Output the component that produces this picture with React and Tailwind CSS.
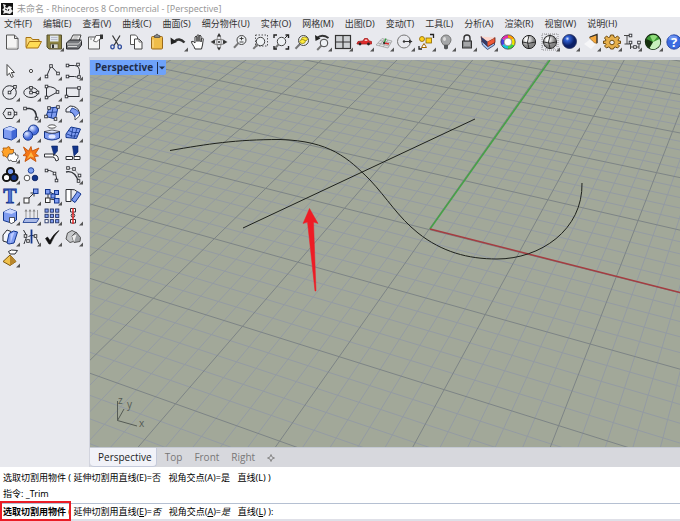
import React from "react";

const INK = "#2f3136";
const BLUE = "#7f9cf0";
const NAVY = "#12358c";

// small open-handle square used by the curve tools
const Dot = ({ x, y, s = 2.6, fill = "#fff" }) => (
  <rect x={x - s / 2} y={y - s / 2} width={s} height={s} fill={fill} stroke={INK} strokeWidth="0.9" />
);

const Lens = ({ x = 11.5, y = 8, r = 4.5, fill = "#eef1f4" }) => (
  <>
    <path d={`M${x - r * 0.7} ${y + r * 0.7}L${x - r - 3} ${y + r + 3.2}`} stroke="#777" strokeWidth="2" />
    <circle cx={x} cy={y} r={r} fill={fill} stroke="#444" strokeWidth="1" />
  </>
);

const mainTools = [
  {
    name: "New",
    icon: (
      <>
        <path d="M4.500 3h8l3.500 3.500v10.500h-11.500z" fill="#f4f4f4" stroke="#555" />
        <path d="M12.500 3v3.500h3.500" stroke="#555" />
        <path d="M6 16h9V8" stroke="#ccc" />
      </>
    ),
  },
  {
    name: "Open",
    icon: (
      <>
        <path d="M3 15V5.500h5l1.500 2h6.500v2" fill="#f8d878" stroke="#a87310" />
        <path d="M3 16l3.500-6.500h12l-3.500 6.500z" fill="#ffdc55" stroke="#a87310" />
      </>
    ),
  },
  {
    name: "Save",
    menu: true,
    icon: (
      <>
        <path d="M3 3h14.500v14H5l-2-2z" fill="#8e8442" stroke="#554f2c" />
        <rect x="6" y="3.500" width="8.500" height="6" fill="#dfe6ee" />
        <path d="M7 5.500h6.500M7 7.500h6.500" stroke="#aab" strokeWidth="0.7" />
        <rect x="6.500" y="12" width="7.500" height="4.500" fill="#d7d7cf" stroke="#554f2c" strokeWidth="0.6" />
        <rect x="8" y="12.500" width="2" height="3.500" fill="#333" />
      </>
    ),
  },
  {
    name: "Print",
    icon: (
      <>
        <path d="M6 9l3-6h8l-2 6z" fill="#f6f6f6" stroke="#444" />
        <path d="M9.500 5h5M8.500 7h5" stroke="#777" strokeWidth="0.7" />
        <path d="M2.500 11l3-3h12v5l-3 4h-12z" fill="#77797d" stroke="#26272a" />
        <path d="M3 12h11.500l3-3.500M4 14.500h9" stroke="#d9d9d9" />
      </>
    ),
  },
  {
    name: "Document Properties",
    icon: (
      <>
        <path d="M3.500 5h11v12h-11z" fill="#f2f3f4" stroke="#555" />
        <path d="M8.500 9l2.500-5.500h6v3l-3 1-2.500 2.500z" fill="#fff" stroke="#444" strokeWidth="0.8" />
        <path d="M15 2.500h3v4.500h-3z" fill="#333" />
        <path d="M5 7h2" stroke="#777" strokeWidth="0.8" />
      </>
    ),
  },
  {
    name: "Cut",
    icon: (
      <>
        <path d="M6.500 3.500l6 10M14 3.500l-6 10" stroke="#333" strokeWidth="1.200" />
        <ellipse cx="6.500" cy="14.800" rx="1.700" ry="2" stroke="#304d9c" strokeWidth="1.300" />
        <ellipse cx="13.700" cy="14.800" rx="1.700" ry="2" stroke="#304d9c" strokeWidth="1.300" />
      </>
    ),
  },
  {
    name: "Copy",
    icon: (
      <>
        <path d="M4.500 3h5l2 2v7.500h-7z" fill="#fff" stroke="#555" />
        <path d="M8.500 7h4.500l3 3v7h-7.500z" fill="#fafafa" stroke="#444" />
        <path d="M13 7v3h3" stroke="#555" strokeWidth="0.8" />
      </>
    ),
  },
  {
    name: "Paste",
    icon: (
      <>
        <rect x="4.500" y="4.500" width="11" height="12.500" rx="1" fill="#f0bd49" stroke="#9a691c" />
        <path d="M7.500 5.500v-2h1.200a1.300 1.300 0 0 1 2.600 0h1.400v2z" fill="#888" stroke="#444" strokeWidth="0.7" />
        <path d="M6 15.500v-8" stroke="#ffe09a" />
      </>
    ),
  },
  {
    name: "Undo",
    menu: true,
    icon: (
      <>
        <path d="M6.500 9.500Q11 5 16.500 10.500" stroke="#333" strokeWidth="2.400" />
        <path d="M2.500 5.500l.5 7 6-2.500z" fill="#222" />
      </>
    ),
  },
  {
    name: "Pan",
    icon: (
      <path
        d="M7 17C6 13.500 3.500 12 3.500 9.500q1.500-1 3.500 1.500V5q1-1.500 2 0v4.500V3.500q1-1.500 2 0v6V4q1-1.500 2 0v6l.5-3.500q1.200-1 1.800.4L14.500 13l-1 4z"
        fill="#fff"
        stroke="#333"
      />
    ),
  },
  {
    name: "Rotate View",
    icon: (
      <>
        <ellipse cx="10" cy="10" rx="7" ry="2.600" stroke="#777" />
        <ellipse cx="10" cy="10" rx="2.200" ry="6.500" stroke="#888" />
        <path d="M1.500 10l4.500-2v3.500zM18.500 10l-4.500-2v4zM8 4.500l2-3.500 2.200 3.500zM8 15.500h4l-2 3z" fill="#333" />
        <circle cx="10" cy="10" r="1" fill="#333" />
      </>
    ),
  },
  {
    name: "Zoom Dynamic",
    icon: (
      <>
        <Lens />
        <path d="M9.500 6.500h4M11.500 4.700v3.600M9.500 10h4" stroke="#333" strokeWidth="0.9" />
      </>
    ),
  },
  {
    name: "Zoom Window",
    icon: (
      <>
        <rect x="5.500" y="3" width="12" height="11" stroke="#444" strokeDasharray="1.5 1.5" strokeWidth="0.9" />
        <Lens x={10.5} y={9.5} r={4.2} />
      </>
    ),
  },
  {
    name: "Zoom Extents",
    icon: (
      <>
        <Lens x={10.5} y={9.5} r={4.2} />
        <path d="M3 6V3h3M14.500 3h3v3M17.500 14v3h-3M3 14v3h3" stroke="#222" strokeWidth="1.400" />
        <path d="M14 6l3-3" stroke="#222" />
      </>
    ),
  },
  {
    name: "Zoom Selected",
    icon: (
      <>
        <Lens x={11.5} y={8.5} r={5} />
        <ellipse cx="12.500" cy="7" rx="3" ry="2" fill="#ffec3d" stroke="#8f8210" strokeWidth="0.8" />
        <ellipse cx="10.500" cy="9.500" rx="2.800" ry="2" fill="#ffec3d" stroke="#8f8210" strokeWidth="0.8" />
      </>
    ),
  },
  {
    name: "Undo View",
    menu: true,
    icon: (
      <>
        <Lens x={12} y={11} r={3.8} />
        <path d="M5 6Q10 1.500 16.500 6" stroke="#333" strokeWidth="2" />
        <path d="M3 3l.5 6 5-2.500z" fill="#222" />
      </>
    ),
  },
  {
    name: "4 Viewports",
    menu: true,
    icon: (
      <>
        <rect x="2.500" y="3.500" width="15" height="13" fill="#ced1d4" stroke="#333" strokeWidth="1.200" />
        <path d="M10 3.500v13M2.500 10h15" stroke="#333" strokeWidth="1.200" />
      </>
    ),
  },
  {
    name: "Set View",
    menu: true,
    icon: (
      <>
        <path d="M3 11.500l1-2 5-.5 1.500-2.500h3l1.500 2.500 2.500.5v2.500H3z" fill="#e02c2c" stroke="#a31f1f" strokeWidth="0.8" />
        <path d="M11 7.500h2l.5 1.500h-3z" fill="#f7caca" />
        <circle cx="6" cy="12" r="1.400" fill="#222" />
        <circle cx="14.500" cy="12" r="1.400" fill="#222" />
      </>
    ),
  },
  {
    name: "CPlane",
    menu: true,
    icon: (
      <>
        <path d="M2 13l6-6.500 10 2.500-4 7z" fill="#dfe2e4" stroke="#999" strokeWidth="0.7" />
        <path d="M4 11l11 3M6 8.500l11 2.500M5 14l5.500-7M9 15l5-7" stroke="#999" strokeWidth="0.7" />
        <path d="M10 11l5 1" stroke="#d42828" strokeWidth="1.300" />
        <path d="M10 11l2-4.500" stroke="#2c9d39" strokeWidth="1.300" />
        <circle cx="10" cy="11" r="1" fill="#222" />
      </>
    ),
  },
  {
    name: "Object Snap",
    menu: true,
    icon: (
      <>
        <circle cx="9" cy="9.500" r="6.500" stroke="#777" />
        <path d="M9 9.500h8" stroke="#333" />
        <circle cx="9" cy="9.500" r="1.200" fill="#333" />
        <path d="M14 7.500l3.500 2-3.500 2z" fill="#333" />
      </>
    ),
  },
  {
    name: "Select",
    menu: true,
    icon: (
      <>
        <path d="M14 2.500h3.500V6M3 14v3h3" stroke="#222" strokeWidth="1.300" />
        <circle cx="6" cy="7" r="2.500" fill="#ffd21c" stroke="#8b6400" strokeWidth="0.8" />
        <rect x="10" y="6" width="5.500" height="5" fill="#ffd21c" stroke="#8b6400" strokeWidth="0.8" />
        <path d="M8 11.500l2.500 4h-5z" fill="#fff" stroke="#a06500" />
      </>
    ),
  },
  {
    name: "Hide",
    menu: true,
    icon: (
      <>
        <path d="M10 3a5 5 0 0 1 5 5q0 2-2.500 5h-5Q5 10 5 8a5 5 0 0 1 5-5z" fill="#a5a7a9" stroke="#777" />
        <path d="M8 13h4v3.500l-2 1-2-1z" fill="#55585b" />
        <ellipse cx="8.500" cy="7" rx="1.500" ry="2" fill="#dcdcdc" />
      </>
    ),
  },
  {
    name: "Lock",
    menu: true,
    icon: (
      <>
        <path d="M7 9.500V6a3 3 0 0 1 6 0v3.500" stroke="#333" strokeWidth="1.400" />
        <rect x="5.500" y="9" width="9" height="7" fill="#85878a" stroke="#333" />
        <path d="M7 11h6M7 13h6" stroke="#d7d7d7" strokeWidth="0.8" />
      </>
    ),
  },
  {
    name: "Layers",
    menu: true,
    icon: (
      <>
        <path d="M3.500 9l6 5 7-4v3l-7 4.500L4.500 13z" fill="#9fc0ee" stroke="#2c3a63" strokeWidth="0.8" />
        <path d="M3 4.500l6.500 5 7.500-4v5l-7 4L4 9z" fill="#ee5a38" stroke="#5e1d14" strokeWidth="0.8" />
        <path d="M3 4.500l6.500 5v5L4 9z" fill="#2f3b6b" />
        <path d="M3 4.500L8 5l9 .5-7.500 4z" fill="#fbd5cb" />
      </>
    ),
  },
  {
    name: "Properties",
    icon: (
      <>
        <path d="M10 4.500A5.500 5.500 0 0 1 14.800 7.250" stroke="#ff9d00" strokeWidth="3.200" />
        <path d="M14.800 7.250A5.500 5.500 0 0 1 14.800 12.750" stroke="#f4e600" strokeWidth="3.200" />
        <path d="M14.800 12.750A5.500 5.500 0 0 1 10 15.500" stroke="#3fd83b" strokeWidth="3.200" />
        <path d="M10 15.500A5.500 5.500 0 0 1 5.200 12.750" stroke="#12c5dc" strokeWidth="3.200" />
        <path d="M5.200 12.750A5.500 5.500 0 0 1 5.200 7.250" stroke="#4a40e5" strokeWidth="3.200" />
        <path d="M5.200 7.250A5.500 5.500 0 0 1 10 4.500" stroke="#e52bb0" strokeWidth="3.200" />
        <circle cx="10" cy="10" r="7.200" stroke="#333" strokeWidth="0.7" />
        <circle cx="10" cy="10" r="3.900" fill="#fff" stroke="#555" strokeWidth="0.6" />
      </>
    ),
  },
  {
    name: "Shaded",
    icon: (
      <>
        <circle cx="10" cy="10" r="6.600" fill="url(#grayBall)" stroke="#222" />
        <path d="M10 3.500q-3 6.500 0 13M3.500 10q6.500 2.500 13 0" stroke="#222" strokeWidth="0.9" />
      </>
    ),
  },
  {
    name: "Ghosted",
    menu: true,
    icon: (
      <>
        <path d="M2 2h16v16H2zM2 6h16M2 10h16M2 14h16M6 2v16M10 2v16M14 2v16" stroke="#666" strokeWidth="0.7" strokeDasharray="1 1" />
        <circle cx="10" cy="10" r="6.500" fill="url(#grayBall)" stroke="#222" />
        <path d="M10 4q-3 6 0 12M4 10q6 2.500 12 0" stroke="#222" strokeWidth="0.9" />
      </>
    ),
  },
  { name: "Render", menu: true, icon: <circle cx="9.500" cy="9.500" r="7" fill="url(#blueBall)" stroke="#222b55" strokeWidth="0.8" /> },
  {
    name: "Spotlight",
    menu: true,
    icon: (
      <>
        <path d="M3 12l8-6 4 6-5 5z" fill="#f6f6f8" />
        <path d="M8 5.500L16 2.500v9q-3-.5-4.500-2.500T8 5.500z" fill="#f7a93c" stroke="#7c5a2d" strokeWidth="0.6" />
        <path d="M9 5L16 2.500v8.500" stroke="#3a342b" strokeWidth="1.300" />
      </>
    ),
  },
  {
    name: "Options",
    menu: true,
    icon: (
      <>
        <path
          d="M8.500 3h3l.5 2 1.500.5 2-1.500 2 2-1.500 2 .5 1h2v2.500h-2l-.5 1 1.500 1.500-2 2-2-1-1.500.5-.5 1.500h-3L8 15.500 6.500 15l-2 1-2-2L4 12.500l-.500-1h-2V9h2L4 8 2.500 6l2-2 2 1.500L8 5z"
          fill="#e6b04b"
          stroke="#6d4a10"
        />
        <circle cx="10" cy="10.500" r="2.300" fill="#eceef2" stroke="#6d4a10" />
      </>
    ),
  },
  {
    name: "Dimensions",
    menu: true,
    icon: (
      <>
        <path d="M2 3.500h7M5 4v8M2.500 12h5M8.500 10v7M17 10v7M8.500 15H17" stroke="#333" strokeWidth="0.9" />
        <Dot x={8.5} y={3.5} />
        <Dot x={8.5} y={10.500} />
        <Dot x={17} y={10.500} />
        <Dot x={13} y={15} />
      </>
    ),
  },
  {
    name: "Grasshopper",
    menu: true,
    icon: (
      <>
        <circle cx="10" cy="9.800" r="7.600" fill="#3d9a35" stroke="#152b10" strokeWidth="1.200" />
        <path d="M10 10L16.500 7a7 7 0 0 1-10 9z" fill="#c9f0bd" />
        <path d="M10 10L3.500 7a7 7 0 0 0 3 9z" fill="#17300f" />
        <path d="M10 10L7 4a7 7 0 0 1 7.500.5z" fill="#8fdb7a" />
      </>
    ),
  },
  {
    name: "Help",
    icon: (
      <>
        <circle cx="10" cy="10" r="7.200" fill="#3c6be0" stroke="#1e3b98" strokeWidth="0.8" />
        <ellipse cx="9" cy="6" rx="4.500" ry="2.500" fill="#6c93f0" />
        <text x="10" y="14.500" textAnchor="middle" fill="#fff" className="text-[13px] font-bold font-['Open_Sans',sans-serif]">
          ?
        </text>
      </>
    ),
  },
];

const sideTools = [
  { name: "Pointer", icon: <path d="M7 3.500v11l2.500-2.300 2 4.300 1.800-.9-2-4.100h3.200z" fill="#fff" stroke="#444" /> },
  { name: "Point", menu: true, icon: <circle cx="10" cy="10" r="1.600" stroke="#444" fill="#fff" /> },
  {
    name: "Polyline",
    menu: true,
    icon: (
      <>
        <path d="M4.500 15.500L9 5l7 7.500" stroke={INK} />
        <Dot x={4.5} y={15.5} />
        <Dot x={9} y={5} />
        <Dot x={16} y={12.5} />
      </>
    ),
  },
  {
    name: "Curve",
    menu: true,
    icon: (
      <>
        <path d="M4.500 4.500h7q5 0 5 6.500t-5 4.500H5" stroke={INK} />
        <Dot x={4.5} y={4.5} />
        <Dot x={15} y={3.5} />
        <Dot x={4.5} y={15.5} />
        <Dot x={16} y={16} />
      </>
    ),
  },
  {
    name: "Circle",
    menu: true,
    icon: (
      <>
        <circle cx="9.500" cy="10.500" r="6.800" stroke={INK} />
        <path d="M9.500 10.500L15 5" stroke={INK} />
        <Dot x={9.5} y={10.5} />
        <Dot x={15} y={4.8} />
      </>
    ),
  },
  {
    name: "Ellipse",
    menu: true,
    icon: (
      <>
        <ellipse cx="10" cy="10.500" rx="7.200" ry="5" stroke={INK} />
        <path d="M10 6v4.500h6.500" stroke={INK} />
        <Dot x={10} y={5.8} />
        <Dot x={10} y={10.5} />
        <Dot x={16.5} y={10.5} />
      </>
    ),
  },
  {
    name: "Arc",
    menu: true,
    icon: (
      <>
        <path d="M4.500 16V4.500Q14 4.500 15.500 10L4.500 16" stroke={INK} />
        <Dot x={4.5} y={4.5} />
        <Dot x={15.5} y={10} />
        <Dot x={4.5} y={15.5} />
      </>
    ),
  },
  {
    name: "Rectangle",
    menu: true,
    icon: (
      <>
        <rect x="3.500" y="6" width="12.500" height="8.500" stroke={INK} />
        <Dot x={3.5} y={14.5} />
        <Dot x={16} y={6} />
      </>
    ),
  },
  {
    name: "Polygon",
    menu: true,
    icon: (
      <>
        <path d="M3 10.500l3-5h6.500l3 5-3 5H6z" stroke={INK} />
        <Dot x={9.5} y={10.5} />
        <Dot x={15.5} y={10.5} />
      </>
    ),
  },
  {
    name: "Fillet Curves",
    menu: true,
    icon: (
      <>
        <path d="M4 5.500h4.500Q15.500 6 15.500 15.500" stroke={INK} strokeWidth="1.600" />
        <Dot x={4} y={5.5} />
        <Dot x={15.5} y={15.5} />
      </>
    ),
  },
  {
    name: "Surface from Points",
    menu: true,
    icon: (
      <>
        <path d="M7 5l9-1-2.500 12L4 13.500z" fill={BLUE} stroke={NAVY} />
        <path d="M11 5L9 15M5.500 9.500l9.500-.5" stroke={NAVY} strokeWidth="0.8" />
        <Dot x={7} y={5} />
        <Dot x={16} y={4} />
        <Dot x={4} y={13.5} />
        <Dot x={13.5} y={16} />
      </>
    ),
  },
  {
    name: "Surface Tools",
    menu: true,
    icon: (
      <>
        <path d="M3 6l4-3q8 0 9.500 7L12 14Q10.500 8 3 9z" fill="#eef1fb" stroke={INK} />
        <path d="M9 5q5 1 7.500 5L12 14q-1-4-5-5.500z" fill={BLUE} stroke={NAVY} strokeWidth="0.8" />
        <path d="M12 14v3l4.500-4v-3" fill="#fff" stroke={INK} strokeWidth="0.8" />
      </>
    ),
  },
  {
    name: "Box",
    menu: true,
    icon: (
      <>
        <path d="M3.500 6L10 3.500 16.500 6v8l-5 3-8-2z" fill={BLUE} stroke={NAVY} />
        <path d="M3.500 6l8 2 5-2L10 3.500z" fill="#c8d6ff" />
        <path d="M11.500 8l5-2v8l-5 3z" fill="#4268d6" />
      </>
    ),
  },
  {
    name: "Boolean Union",
    menu: true,
    icon: (
      <>
        <circle cx="12.500" cy="7" r="5" fill="url(#softBall)" stroke={NAVY} />
        <circle cx="7" cy="12.500" r="4.700" fill="url(#softBall)" stroke={NAVY} />
      </>
    ),
  },
  {
    name: "Extrude Solid",
    menu: true,
    icon: (
      <>
        <ellipse cx="10" cy="3.500" rx="4" ry="1.700" stroke="#555" fill="#fff" />
        <path d="M2.500 8.500v6.500q7.500 4 15 0V8.500q-7.500 3.500-15 0z" fill={BLUE} stroke={NAVY} />
        <path d="M2.500 8.500q7.500-3 15 0-7.500 3.500-15 0z" fill="#e2e9ff" stroke={INK} strokeWidth="0.7" />
        <ellipse cx="10" cy="13.500" rx="3.500" ry="2" fill="#e2e9ff" />
      </>
    ),
  },
  {
    name: "Surface Edit",
    menu: true,
    icon: (
      <>
        <path d="M3 11l5-7 9.500 2-4 9.500L3 14.500z" fill={BLUE} stroke={NAVY} />
        <path d="M5.500 7.500q5 3 10 2M10 4.500L8 14.500M4 11q5 3 10 2M14 5.500l-3 9.500" stroke={NAVY} strokeWidth="0.8" />
      </>
    ),
  },
  {
    name: "Join",
    menu: true,
    icon: (
      <>
        <path d="M3 4h4l1-1.500 2 1v2h3.500V9l-2 1.500v2H8l-1.500 1L5 12H3V9.500L2 7.500 3.500 6z" fill="#ffa229" stroke="#a65300" strokeWidth="0.8" />
        <path d="M9 10h3.500l1-1.500 2 .5v2h2.500v3l-1.500 1.500v2H12l-1-1.500-2 1-1.500-3z" fill="#fff" stroke="#555" strokeWidth="0.9" />
      </>
    ),
  },
  {
    name: "Explode",
    icon: (
      <>
        <path d="M2.500 3l5 4 2.500-4.500 1 4.500 7-3-3.500 5.500 3 2.500-4 .5 1.500 5-5.500-3.500L4 17.500l1.500-5.500-3.500-.5 3-2.500z" fill="#f57716" stroke="#bf4a00" strokeWidth="0.8" />
        <path d="M6 15l4-7 3 5.500-3.500-1z" fill="#ffba45" />
      </>
    ),
  },
  {
    name: "Trim",
    icon: (
      <>
        <path d="M9.500 2h6v5l-3.500 4z" fill={NAVY} stroke="#0b2361" strokeWidth="0.6" />
        <path d="M2.500 10h9v3h-9z" fill="#fff" stroke={INK} />
        <path d="M12 11q4-.5 4.500 5l-2.500 1q-.5-3.500-3-4" fill="#fff" stroke={INK} />
      </>
    ),
  },
  {
    name: "Split",
    icon: (
      <>
        <path d="M9.500 2h5.500v6l-4 4z" fill={NAVY} stroke="#0b2361" strokeWidth="0.6" />
        <path d="M3 12.500h6.500v3H3zM11 12.500h6v3h-6z" fill="#fff" stroke={INK} />
      </>
    ),
  },
  {
    name: "Group",
    menu: true,
    icon: (
      <g stroke="#151515" strokeWidth="2">
        <circle cx="10.500" cy="6.500" r="3.600" fill="#7ca0f4" />
        <circle cx="6.500" cy="12.500" r="3.600" fill="#fff" />
        <circle cx="14" cy="12.500" r="3.600" fill={NAVY} />
      </g>
    ),
  },
  {
    name: "Ungroup",
    icon: (
      <>
        <circle cx="10" cy="5.500" r="2.800" fill="#7ca0f4" stroke={NAVY} strokeWidth="0.9" />
        <circle cx="6" cy="13" r="2.800" fill="#fff" stroke="#444" strokeWidth="0.9" />
        <circle cx="14" cy="13" r="2.800" fill={NAVY} stroke="#0b2361" strokeWidth="0.9" />
      </>
    ),
  },
  {
    name: "Edit Points",
    icon: (
      <>
        <path d="M4.500 5.500h3Q14 7 14.500 13v3" stroke={INK} />
        <Dot x={4.5} y={5.5} />
        <Dot x={12.5} y={8.5} />
        <Dot x={14.5} y={15.5} />
      </>
    ),
  },
  {
    name: "Control Points",
    menu: true,
    icon: (
      <>
        <path d="M3 7q9-2 12.500 10" stroke={INK} strokeWidth="1.300" />
        <path d="M5 3l6 1 5.500 6.500-1 5.500" stroke="#888" strokeWidth="0.7" />
        <Dot x={5} y={3} />
        <Dot x={11} y={4} />
        <Dot x={16.5} y={10.5} />
        <Dot x={15.5} y={16} />
      </>
    ),
  },
  {
    name: "Text",
    menu: true,
    icon: (
      <text
        x="10"
        y="17"
        textAnchor="middle"
        fill="#5278df"
        stroke={NAVY}
        strokeWidth="0.8"
        className="text-[20px] font-bold font-['Liberation_Serif',serif]"
      >
        T
      </text>
    ),
  },
  {
    name: "Move",
    menu: true,
    icon: (
      <>
        <path d="M7 13l6-6M9.500 7H13v3.500" stroke={INK} />
        <rect x="3" y="12" width="5" height="5" fill="#fff" stroke="#333" />
        <rect x="12.500" y="3" width="4.500" height="4.500" fill={BLUE} stroke={NAVY} />
      </>
    ),
  },
  {
    name: "Copy Object",
    menu: true,
    icon: (
      <>
        <path d="M8 6l5 3M8 13l6 1M6 8v4" stroke={INK} />
        <rect x="3.500" y="3.500" width="4.500" height="4.500" fill={BLUE} stroke={NAVY} />
        <rect x="3.500" y="12" width="4.500" height="4.500" fill="#fff" stroke="#333" />
        <rect x="12.500" y="4.500" width="4" height="4" fill={BLUE} stroke={NAVY} />
        <rect x="9" y="8" width="4" height="4" fill={BLUE} stroke={NAVY} />
        <rect x="12.500" y="12.500" width="4.500" height="4.500" fill={BLUE} stroke={NAVY} />
      </>
    ),
  },
  {
    name: "Rotate",
    icon: (
      <>
        <path d="M3 3.500h5v12H3z" fill="#fff" stroke={INK} />
        <path d="M8.500 14l6-8.500 3.500 2.500-6 8.500z" fill={BLUE} stroke={NAVY} />
        <path d="M8 3.500q4-.5 6 2" stroke={INK} />
      </>
    ),
  },
  {
    name: "Solid Edit",
    menu: true,
    icon: (
      <>
        <path d="M3.500 6l6.500-3 6.500 2.500v8.500l-5 3-8-2.500z" fill={BLUE} stroke={NAVY} />
        <path d="M3.500 6l8 2 5-2.500L10 3z" fill="#cdd9ff" />
        <path d="M9.500 11.500h5v4.500l-3 1.500-2-1z" fill="#fff" stroke={INK} strokeWidth="0.8" />
      </>
    ),
  },
  {
    name: "Project",
    menu: true,
    icon: (
      <>
        <path d="M4 12.500h14l-2.500 4H2z" fill="#a9b9e6" stroke={NAVY} strokeWidth="0.8" />
        <path d="M5 12V4M9 12V4M13 12V4M16.500 12V4" stroke="#999" />
        <path d="M3.500 5.500L5 3l1.500 2.500zM7.500 5.500L9 3l1.500 2.500zM11.500 5.500L13 3l1.500 2.500z" fill="#888" />
      </>
    ),
  },
  {
    name: "Array",
    menu: true,
    icon: (
      <g fill={BLUE} stroke="#253668" strokeWidth="0.9">
        <rect x="3" y="3" width="3.200" height="3.200" />
        <rect x="8.300" y="3" width="3.200" height="3.200" />
        <rect x="13.600" y="3" width="3.200" height="3.200" />
        <rect x="3" y="8.300" width="3.200" height="3.200" />
        <rect x="8.300" y="8.300" width="3.200" height="3.200" />
        <rect x="13.600" y="8.300" width="3.200" height="3.200" />
        <rect x="3" y="13.600" width="3.200" height="3.200" fill="#fff" />
        <rect x="8.300" y="13.600" width="3.200" height="3.200" />
        <rect x="13.600" y="13.600" width="3.200" height="3.200" />
      </g>
    ),
  },
  {
    name: "Align",
    menu: true,
    icon: (
      <>
        <path d="M7.500 2.500h5v3.500h-5zM7.500 13.500h5v3.500h-5z" fill="#fff" stroke={INK} />
        <circle cx="10" cy="9.500" r="1.800" fill="#fff" stroke={INK} />
        <path d="M10 2v16" stroke="#e32727" strokeWidth="1.500" />
      </>
    ),
  },
  {
    name: "Extract Surface",
    menu: true,
    icon: (
      <>
        <path d="M3 8l4-5 4 1.500-3 11-5-1.500z" fill="#f4f6fc" stroke={INK} />
        <path d="M9 6.500l4.500-2.500 4 1-3.500 11-5 1-2-1z" fill={BLUE} stroke={NAVY} />
        <path d="M10.500 7l4-2-4 11.500" fill="#bccbff" />
      </>
    ),
  },
  {
    name: "Orient Curve",
    menu: true,
    icon: (
      <>
        <path d="M2.500 3q4 5 2.500 8.500T3 17M7.500 9.500q5-3 8 2L18 17" stroke={INK} />
        <path d="M10.500 2.500v14" stroke={NAVY} strokeWidth="1.800" />
        <Dot x={4.5} y={9} />
        <Dot x={7} y={14} />
        <Dot x={14.5} y={9} />
      </>
    ),
  },
  { name: "Check", menu: true, icon: <path d="M3.500 11.500L5.500 10l2.500 3.500Q12 6.500 17 3.500q-5 5-8.500 13.500h-1.500z" fill="#111" stroke="#111" strokeWidth="0.6" /> },
  {
    name: "Mesh Tools",
    menu: true,
    icon: (
      <>
        <path d="M3 12l1.500-6L9 3.500l4 2-1 8.500-5 1.500z" fill="#c6c8ca" stroke="#555" />
        <path d="M9 9l4-4 4.500 5.500-.5 4-6 1z" fill="#9fa2a5" stroke="#555" />
        <path d="M9 9l2 6.500 2.500-8z" fill="#eee" />
      </>
    ),
  },
  {
    name: "Gumball",
    menu: true,
    icon: (
      <>
        <path d="M3 13.500L10 7l6 6.500-6 4z" fill="#f0c14c" stroke="#7d5810" />
        <path d="M10 7v10.500l6-4z" fill="#b9862a" />
        <path d="M8.500 3.500l3-1.500 6 .5-2.500 3.500h-5z" fill="#fff" stroke={INK} />
      </>
    ),
  },
];

const menus = [
  "文件(F)",
  "编辑(E)",
  "查看(V)",
  "曲线(C)",
  "曲面(S)",
  "细分物件(U)",
  "实体(O)",
  "网格(M)",
  "出图(D)",
  "变动(T)",
  "工具(L)",
  "分析(A)",
  "渲染(R)",
  "视窗(W)",
  "说明(H)",
];

const ToolButton = ({ tool }) => (
  <button aria-label={tool.name} className="flex items-center justify-center min-w-0">
    <svg viewBox="0 0 20 20" className="size-5 shrink-0 overflow-visible" fill="none">
      {tool.icon}
      {tool.menu && <path d="M20 15.500v4h-4z" fill="#555" />}
    </svg>
  </button>
);

// construction plane: maps plane units (major lines) to view coordinates
const project = (px, py) => {
  const u = (px + 2) / 4;
  const v = (py + 2) / 4;
  const w = 1 - 0.1533 * u + 0.3633 * v;
  return [(63.3 + 333.5 * u + 288.8 * v) / w, (238.3 + 71.3 * u - 173.3 * v) / w];
};

const gridPath = (major) => {
  let d = "";
  const add = (a, b) => {
    const [x1, y1] = project(...a);
    const [x2, y2] = project(...b);
    d += `M${x1.toFixed(1)} ${y1.toFixed(1)}L${x2.toFixed(1)} ${y2.toFixed(1)}`;
  };
  for (let i = -60; i <= 60; i++) {
    if ((i % 5 === 0) !== major) continue;
    const t = i / 5;
    if (i <= 30) add([t, -5], [t, 12]);
    if (i >= -25) add([-12, t], [6, t]);
  }
  return d;
};

const Viewport = () => (
  <svg className="block w-full h-full" fill="none" role="img" aria-label="Perspective viewport">
    <path d={gridPath(false)} stroke="#949ba3" strokeWidth="1" />
    <path d={gridPath(true)} stroke="#7d8486" strokeWidth="1" />
    <path d="M340 169L460 0" stroke="#46a146" strokeWidth="1.500" />
    <path d="M340 169L592 233" stroke="#a53c40" strokeWidth="1.500" />
    <path
      d="M80 90.500C118 84 145 79.500 190 79.500C240 81 258 98 280 120C297 138 308 157 328 173C352 192 378 199 407 199C450 199 493 170 492 123"
      stroke="#1e211c"
    />
    <path d="M153 168L385 59" stroke="#1e211c" />
    <path d="M219.500 148.500L228 163.500L223.500 162L226 231H225L217.500 162L213 163.500Z" fill="#ee1c25" stroke="#ee1c25" strokeWidth="0.5" />
    <path d="M27.500 341V360.500L34 349M27.500 360.500L47 366" stroke="#555b55" />
    <g fill="#555b55" className="text-[10px] font-['Open_Sans',sans-serif]">
      <text x="28" y="344">z</text>
      <text x="37" y="348">y</text>
      <text x="49" y="367">x</text>
    </g>
  </svg>
);

const App = () => {
  return (
    <div className="flex flex-col h-screen overflow-hidden bg-[#e8e9ee] text-[9px] text-[#333] font-['Noto_Sans','Noto_Sans_CJK_SC',sans-serif]">
      <svg className="absolute size-0" aria-hidden="true">
        <defs>
          <radialGradient id="grayBall" cx="0.35" cy="0.3">
            <stop offset="0.2" stopColor="#fff" />
            <stop offset="1" stopColor="#858585" />
          </radialGradient>
          <radialGradient id="blueBall" cx="0.35" cy="0.3">
            <stop offset="0" stopColor="#e6edff" />
            <stop offset="0.3" stopColor="#2f5fd2" />
            <stop offset="1" stopColor="#0b1f66" />
          </radialGradient>
          <radialGradient id="softBall" cx="0.35" cy="0.3">
            <stop offset="0.1" stopColor="#d8e3ff" />
            <stop offset="1" stopColor="#4a6edb" />
          </radialGradient>
        </defs>
      </svg>

      <header className="flex items-center h-[17px] shrink-0 bg-white text-[#999]">
        <svg viewBox="0 0 12 12" className="size-3 ml-px mr-1" fill="none">
          <rect width="12" height="12" fill="#111" />
          <path d="M2 1l3 1-1 2 2 1 2-2 3 1-1 2 2 2-3 3-4-1-3 1 1-3-2-1 2-2z" fill="#eee" />
          <path d="M4 6l2 1M7 8l1-2" stroke="#111" />
        </svg>
        <h1>未命名 - Rhinoceros 8 Commercial - [Perspective]</h1>
      </header>

      <nav className="flex items-center gap-[11px] h-[14px] shrink-0 px-1 whitespace-nowrap">
        {menus.map((m) => (
          <button key={m}>{m}</button>
        ))}
      </nav>

      <div className="flex h-[26px] shrink-0 pl-0.5 -mr-1 pb-1">
        {mainTools.map((t) => (
          <div key={t.name} className="flex flex-1 justify-center min-w-0">
            <ToolButton tool={t} />
          </div>
        ))}
      </div>

      <main className="flex flex-1 min-h-0">
        <aside className="w-[90px] shrink-0 border-r border-[#d2d4de] pt-1">
          <div className="grid grid-cols-4 grid-rows-10 w-[83px] h-[207px]">
            {sideTools.map((t) => (
              <ToolButton key={t.name} tool={t} />
            ))}
          </div>
        </aside>
        <section className="flex flex-col flex-1 min-w-0 border-t-3 border-[#d5d7df]">
          <div className="relative flex-1 min-h-0 bg-[#a2a899]">
            <Viewport />
            <button className="absolute top-0 left-0 flex items-center h-[15px] rounded-br-xs bg-[#6ea2fa] pl-[5px] font-bold text-[10px] text-[#1f2c48] font-['Open_Sans',sans-serif]">
              Perspective
              <span className="ml-1 h-3 border-l border-[#1f2c48]" />
              <svg viewBox="0 0 8 8" className="size-2">
                <path d="M1 2.500h6L4 5.500z" fill="#1f2c48" />
              </svg>
            </button>
          </div>
          <div className="flex items-center gap-3 h-5 shrink-0 border-t border-[#c3c8d2] bg-[#d7d8dd] text-[10px] text-[#777] font-['Open_Sans',sans-serif]">
            <button className="h-full pl-2 pr-1 -mr-1 rounded-b-sm border-r border-b border-[#c5cada] bg-[#f1f2f8] text-[#222]">Perspective</button>
            <button>Top</button>
            <button>Front</button>
            <button>Right</button>
            <button aria-label="New viewport">
              <svg viewBox="0 0 8 8" className="size-2" fill="none" stroke="#888">
                <path d="M4 .5L5 3l2.500 1L5 5 4 7.500 3 5 .500 4 3 3z" />
              </svg>
            </button>
          </div>
        </section>
      </main>

      <footer className="shrink-0 bg-white text-black leading-4 whitespace-pre">
        <div className="px-[3px] pt-[3px] h-9">
          <p>
            选取切割用物件 ( 延伸切割用直线(E)=否<span className="mx-[3px]">  视角交点(A)=是  </span>直线(L) )
          </p>
          <p>指令: _Trim</p>
        </div>
        <div className="relative h-[18px] border-t border-b-2 border-t-[#b5c0d2] border-b-[#dfe0e8] px-[3px]">
          <p>
            <b>选取切割用物件</b> ( 延伸切割用直线(<u>E</u>)=<i>否</i>
            <span className="mx-[3px]">
              {"  视角交点("}
              <u>A</u>)=<i>是</i>
              {"  "}
            </span>
            直线(<u>L</u>) ):
          </p>
          <span className="absolute -top-[3px] left-0 w-[71px] h-[20px] border-2 border-[#ea1d26]" />
        </div>
      </footer>
    </div>
  );
};

export default App;
